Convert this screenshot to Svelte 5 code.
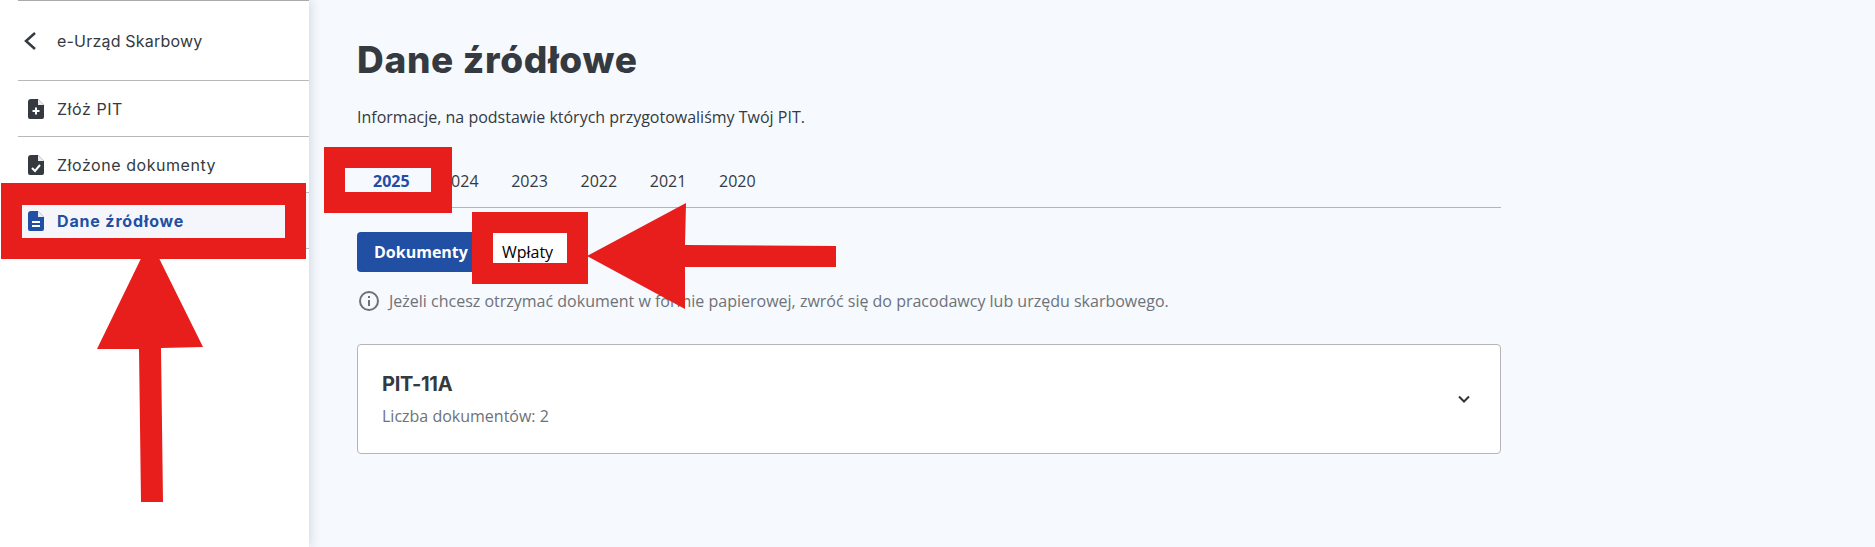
<script>
    const years = [2025, 2024, 2023, 2022, 2021, 2020];
    const navItems = [
        { label: "Złóż PIT", icon: "add" },
        { label: "Złożone dokumenty", icon: "check" },
        { label: "Dane źródłowe", icon: "lines", active: true },
    ];
    const filePath = "M7 2h7l6 6v12a2 2 0 0 1-2 2H6a2 2 0 0 1-2-2V5a3 3 0 0 1 3-3z";
</script>

<div class="page">
    <aside>
        <div class="back">
            <svg width="24" height="24" viewBox="0 0 24 24" fill="none" stroke="currentColor" stroke-width="2.5">
                <path d="M17 4L8 12l9 8" />
            </svg>
            <span>e-Urząd Skarbowy</span>
        </div>
        {#each navItems as item}
            <div class="nav-item" class:active={item.active}>
                <svg class="file" width="24" height="24" viewBox="0 0 24 24">
                    <path d={filePath} fill="currentColor" />
                    <path d="M14 2v6h6" fill="#fff" opacity="0.9" />
                    {#if item.icon === "add"}
                        <path d="M12 10.5v7M8.5 14h7" stroke="#fff" stroke-width="2" fill="none" />
                    {:else if item.icon === "check"}
                        <path d="M8 15l3 3 5-6" stroke="#fff" stroke-width="2" fill="none" />
                    {:else}
                        <path d="M8 13h8M8 17h8" stroke="#fff" stroke-width="2" fill="none" />
                    {/if}
                </svg>
                <span>{item.label}</span>
            </div>
        {/each}
        <div class="nav-end"></div>
    </aside>

    <main>
        <h1>Dane źródłowe</h1>
        <p class="lead">Informacje, na podstawie których przygotowaliśmy Twój PIT.</p>

        <div class="tabs">
            {#each years as year, i}
                <div class="tab" class:current={i === 0}>{year}</div>
            {/each}
        </div>

        <div class="switch">
            <button class="primary">Dokumenty</button>
            <button class="secondary">Wpłaty</button>
        </div>

        <div class="info">
            <svg width="24" height="24" viewBox="0 0 24 24" fill="none" stroke="currentColor" stroke-width="2">
                <circle cx="12" cy="12" r="9" />
                <path d="M12 11v6" />
                <path d="M12 7v2" />
            </svg>
            <span>Jeżeli chcesz otrzymać dokument w formie papierowej, zwróć się do pracodawcy lub urzędu skarbowego.</span>
        </div>

        <div class="card">
            <div>
                <h2>PIT-11A</h2>
                <div class="count">Liczba dokumentów: 2</div>
            </div>
            <svg width="24" height="24" viewBox="0 0 24 24" fill="none" stroke="#2f343a" stroke-width="2">
                <path d="M7 9.5l5 5 5-5" />
            </svg>
        </div>
    </main>

    <!-- red marks painted over the screenshot -->
    <svg class="marks" width="1875" height="547" viewBox="0 0 1875 547">
        <g fill="#e71e1c" fill-rule="evenodd">
            <path d="M1 183H306V259H1z M22 205V238H285V205z" />
            <path d="M324 147H452V213H324z M345 168V192H431V168z" />
            <path d="M472 212H588V284H472z M493 233V263H567V233z" />
            <path d="M150 240L203 347L161 348L163 502L141 502L139 349L97 349z" />
            <path d="M587 256L686 203L685 245L836 246L836 267L685 267L685 309z" />
        </g>
    </svg>
</div>

<style>
    :global(body) {
        background: #f6f9fe;
    }
    .page {
        position: relative;
        display: flex;
        height: 547px;
        overflow: hidden;
        font-family: "Open Sans", "Noto Sans", sans-serif;
        font-size: 16px;
        color: #343a40;
    }
    aside {
        width: 309px;
        flex-shrink: 0;
        background: #fff;
        box-shadow: 2px 0 10px rgba(60, 80, 110, 0.18);
        padding-left: 18px;
        box-sizing: border-box;
        font-family: Inter, "Open Sans", sans-serif;
        position: relative;
    }
    .back {
        height: 80px;
        display: flex;
        align-items: center;
        gap: 15px;
        border-top: 1px solid #aaa;
        box-sizing: border-box;
        letter-spacing: 0.2px;
    }
    .nav-item {
        height: 56px;
        display: flex;
        align-items: center;
        gap: 9px;
        padding-left: 6px;
        border-top: 1px solid #b8b8b8;
        box-sizing: border-box;
        letter-spacing: 0.55px;
    }
    .nav-item.active {
        color: #214fa3;
        font-weight: 700;
        background: #f4f6fb;
        letter-spacing: 0.85px;
    }
    .nav-end {
        border-top: 1px solid #b8b8b8;
    }
    .file {
        flex-shrink: 0;
    }
    main {
        flex: 1;
        padding: 0 0 0 48px;
        min-width: 0;
    }
    h1 {
        margin: 38px 0 0;
        font-family: Inter, "Open Sans", sans-serif;
        font-size: 37px;
        line-height: 44px;
        font-weight: 800;
        letter-spacing: 0.7px;
    }
    .lead {
        margin: 23px 0 0;
        line-height: 24px;
    }
    .tabs {
        width: 1144px;
        height: 57px;
        margin-top: 22px;
        display: flex;
        align-items: center;
        border-bottom: 1px solid #b5b5b5;
        box-sizing: border-box;
        padding-top: 3px;
    }
    .tab {
        padding: 0 16.35px;
    }
    .tab.current {
        color: #214fa3;
        font-weight: 700;
        padding: 0 16px;
    }
    .switch {
        display: flex;
        margin-top: 24px;
    }
    .switch button {
        height: 40px;
        padding: 0 17px;
        border: 0;
        border-radius: 4px;
        font-family: inherit;
        font-size: 16px;
    }
    .primary {
        background: #214fa3;
        color: #fff;
        font-weight: 700;
    }
    .secondary {
        background: #fff;
        color: #000;
    }
    .info {
        display: flex;
        align-items: center;
        gap: 8px;
        margin-top: 17px;
        color: #6d7278;
    }
    .card {
        width: 1144px;
        height: 110px;
        margin-top: 31px;
        box-sizing: border-box;
        background: #fff;
        border: 1px solid #b5b5b5;
        border-radius: 4px;
        padding: 0 24px;
        display: flex;
        align-items: center;
        justify-content: space-between;
    }
    h2 {
        margin: 0 0 6px;
        font-family: Inter, "Open Sans", sans-serif;
        font-size: 20px;
        line-height: 28px;
        font-weight: 700;
        letter-spacing: -0.3px;
    }
    .count {
        color: #6d7278;
        line-height: 24px;
    }
    .marks {
        position: absolute;
        left: 0;
        top: 0;
        pointer-events: none;
    }
</style>
